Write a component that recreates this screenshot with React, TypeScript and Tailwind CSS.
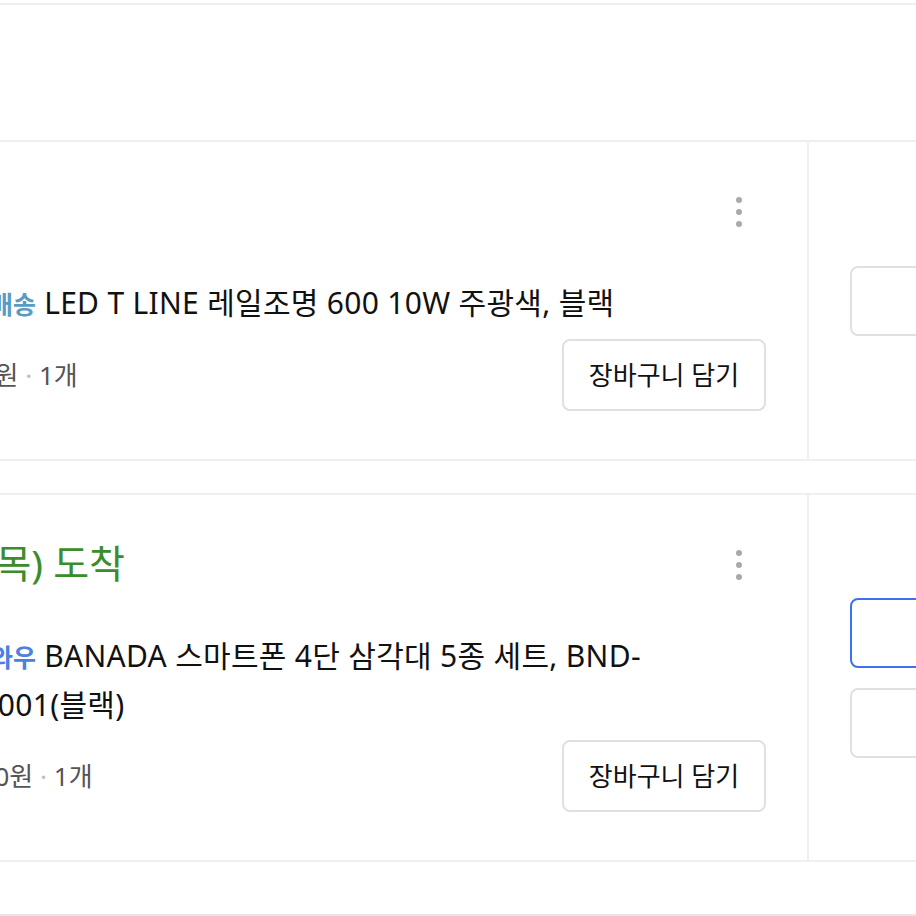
import React from "react";

type CartItem = {
  id: number;
  badge: string;
  badgeClass: string;
  arrival?: string;
  titleLines: string[];
  price: string;
  qty: number;
  actions: ("primary" | "plain")[];
};

const items: CartItem[] = [
  {
    id: 1,
    badge: "로켓배송",
    badgeClass: "text-[#5a9bc6]",
    titleLines: ["LED T LINE 레일조명 600 10W 주광색, 블랙"],
    price: "9,900원",
    qty: 1,
    actions: ["plain"],
  },
  {
    id: 2,
    badge: "로켓와우",
    badgeClass: "text-[#4b80e2]",
    arrival: "내일(목) 도착",
    titleLines: ["BANADA 스마트폰 4단 삼각대 5종 세트, BND-", "K31001(블랙)"],
    price: "12,900원",
    qty: 1,
    actions: ["primary", "plain"],
  },
];

function MoreDots() {
  return (
    <button
      type="button"
      className="w-[54px] h-[48px] shrink-0 flex flex-col items-center justify-center gap-[6px] pt-1"
    >
      <span className="w-[6px] h-[6px] rounded-full bg-[#a9a9a9]" />
      <span className="w-[6px] h-[6px] rounded-full bg-[#a9a9a9]" />
      <span className="w-[6px] h-[6px] rounded-full bg-[#a9a9a9]" />
    </button>
  );
}

function CartRow({ item }: { item: CartItem }) {
  return (
    <div className="flex border-y-2 border-[#efefef] bg-white">
      {/* main column, its left part lies off screen */}
      <div className="w-[1209px] shrink-0 flex border-r-2 border-[#efefef] pr-[41px] pt-[44px] pb-[48px]">
        <div className="w-[328px] shrink-0" />
        <div className="flex-1 min-w-0">
          {/* Arrival + menu */}
          <div className="flex items-center justify-between h-[48px]">
            <span className="-ml-[16px] text-[39px] leading-[48px] text-[#3b8c2b]">
              {item.arrival ?? ""}
            </span>
            <MoreDots />
          </div>

          {/* Title */}
          <p className="mt-[45px] pl-[16px] text-[30px] tracking-[0.3px] leading-[48px] text-[#111] whitespace-nowrap">
            <span className={`font-bold text-[25px] tracking-normal ${item.badgeClass}`}>{item.badge}</span>{" "}
            {item.titleLines.map((line, i) => (
              <React.Fragment key={i}>
                {i > 0 && <br />}
                {line}
              </React.Fragment>
            ))}
          </p>

          {/* Price + cart button */}
          <div className="mt-[11px] flex items-center justify-between">
            <span className="text-[26px] text-[#555]">
              {item.price}
              <span className="text-[#bbb]"> · </span>
              {item.qty}개
            </span>
            <button
              type="button"
              className="w-[204px] h-[72px] rounded-lg border-2 border-[#e0e0e0] bg-white text-[26px] text-[#111]"
            >
              장바구니 담기
            </button>
          </div>
        </div>
      </div>

      {/* Right column actions */}
      <div className="flex-1 pl-[41px] flex flex-col justify-center gap-5">
        {item.actions.map((a, i) => (
          <div
            key={i}
            className={
              a === "primary"
                ? "w-[220px] h-[70px] rounded-lg border-2 border-[#3f6ff3]"
                : "w-[220px] h-[70px] rounded-lg border-2 border-[#e0e0e0]"
            }
          />
        ))}
      </div>
    </div>
  );
}

export default function App() {
  return (
    <div className="w-[916px] h-[916px] overflow-hidden bg-white font-['Noto_Sans','Noto_Sans_CJK_KR',sans-serif]">
      <div className="-ml-[400px] w-[1316px]">
        <div className="h-[3px]" />
        <div className="h-[137px] border-t-2 border-[#efefef]" />
        <CartRow item={items[0]} />
        <div className="h-[32px]" />
        <CartRow item={items[1]} />
        <div className="h-[52px]" />
        <div className="h-[10px] border-t-2 border-[#e6e6e6] bg-[#f3f3f3]" />
      </div>
    </div>
  );
}
